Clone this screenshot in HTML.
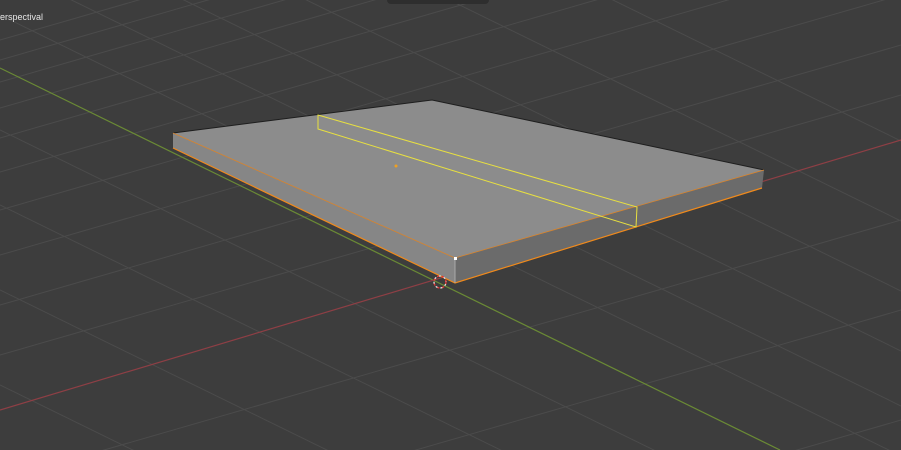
<!DOCTYPE html>
<html><head><style>
html,body{margin:0;width:901px;height:450px;overflow:hidden}
body{background:#3d3d3d;font-family:"Liberation Sans",sans-serif}
#w{position:relative;width:901px;height:450px;overflow:hidden}
svg{display:block;position:absolute;left:0;top:0;overflow:hidden}
.t{position:absolute;left:0;top:12px;color:#e6e6e6;font-size:9px;line-height:10px}
.p{position:absolute;left:387px;top:0;width:102px;height:4px;background:#2e2e2e;border-radius:0 0 4px 4px}
</style></head><body><div id="w">
<svg width="901" height="450" viewBox="0 0 901 450">
<g stroke="#4b4b4b" stroke-width="1">
<line x1="0" y1="-300" x2="901" y2="141"/>
<line x1="0" y1="-220" x2="901" y2="221"/>
<line x1="0" y1="-150" x2="901" y2="291"/>
<line x1="0" y1="-90" x2="901" y2="351"/>
<line x1="0" y1="-35" x2="901" y2="406"/>
<line x1="0" y1="15" x2="901" y2="456"/>
<line x1="0" y1="130" x2="901" y2="571"/>
<line x1="0" y1="205" x2="901" y2="646"/>
<line x1="0" y1="290" x2="901" y2="731"/>
<line x1="0" y1="385" x2="901" y2="826"/>
<line x1="0" y1="40" x2="901" y2="-220"/>
<line x1="0" y1="60" x2="901" y2="-200"/>
<line x1="0" y1="82" x2="901" y2="-178"/>
<line x1="0" y1="108" x2="901" y2="-152"/>
<line x1="0" y1="138" x2="901" y2="-122"/>
<line x1="0" y1="172" x2="901" y2="-88"/>
<line x1="0" y1="210" x2="901" y2="-50"/>
<line x1="0" y1="255" x2="901" y2="-5"/>
<line x1="0" y1="305" x2="901" y2="45"/>
<line x1="0" y1="355" x2="901" y2="95"/>
<line x1="0" y1="480" x2="901" y2="220"/>
<line x1="0" y1="570" x2="901" y2="310"/>
<line x1="0" y1="680" x2="901" y2="420"/>
</g>
<line x1="0" y1="68" x2="780" y2="450" stroke="#6a8a35" stroke-width="1.2"/>
<line x1="0" y1="410" x2="901" y2="140" stroke="#8e3f45" stroke-width="1.2"/>
<polygon points="173,133 455,258 455,283 173,148" fill="#868686"/>
<polygon points="455,258 764,170 762,188 455,283" fill="#6b6b6b"/>
<polygon points="173,133 432,100 764,170 455,258" fill="#8c8c8c"/>
<polyline points="173,133 432,100 764,170" fill="none" stroke="#1e1e1e" stroke-width="1"/>
<polyline points="173,148 455,283 762,188" fill="none" stroke="#f08a1c" stroke-width="1.2"/>
<polyline points="173,133 455,258 764,170" fill="none" stroke="#d9842c" stroke-width="0.8"/>
<line x1="455" y1="258" x2="455" y2="283" stroke="#aaa" stroke-width="1"/>
<polygon points="318,115 637,207 636,227 318,129" fill="none" stroke="#e8e040" stroke-width="1"/>
<rect x="454" y="257" width="3" height="3" fill="#fff"/>
<circle cx="396" cy="166" r="1.5" fill="#f0a020"/>
<circle cx="440" cy="282" r="6" fill="none" stroke="#e33" stroke-width="1.3" stroke-dasharray="3 2"/>
<circle cx="440" cy="282" r="6" fill="none" stroke="#ddd" stroke-width="1.3" stroke-dasharray="2 3" stroke-dashoffset="3"/>
</svg>
<div class="p"></div>
<div class="t">erspectival</div>
</div></body></html>
